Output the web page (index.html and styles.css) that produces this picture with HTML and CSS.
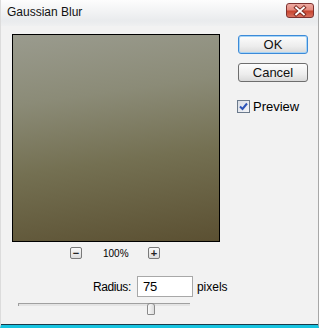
FILE: index.html
```html
<!DOCTYPE html>
<html lang="en">

<head>
    <meta charset="UTF-8">
    <meta name="viewport" content="width=device-width, initial-scale=1.0">
    <title>Gaussian Blur</title>
    <link rel="stylesheet" href="styles.css">
</head>

<body>
    <div class="dialog">
        <div class="titlebar">
            <span class="title">Gaussian Blur</span>
            <button class="close" aria-label="Close">
                <svg width="27" height="14" viewBox="0 0 27 14">
                    <path d="M9.5 3.5 L17.5 10.5 M17.5 3.5 L9.5 10.5" stroke="#7a2a22" stroke-width="4" stroke-linecap="square" />
                    <path d="M9.5 3.5 L17.5 10.5 M17.5 3.5 L9.5 10.5" stroke="#fff" stroke-width="2" stroke-linecap="square" />
                </svg>
            </button>
        </div>
        <div class="content">
            <div class="main">
                <div class="preview-col">
                    <div class="preview"></div>
                    <div class="zoom-row">
                        <span class="zoom-btn">&minus;</span>
                        <span class="zoom-value">100%</span>
                        <span class="zoom-btn">+</span>
                    </div>
                </div>
                <div class="actions">
                    <button class="button default">OK</button>
                    <button class="button">Cancel</button>
                    <label class="check">
                        <span class="box">
                            <svg width="9" height="9" viewBox="0 0 9 9">
                                <path d="M1 4.5 L3.5 7 L8 1.5" fill="none" stroke="#2c54b8" stroke-width="2" />
                            </svg>
                        </span>
                        Preview
                    </label>
                </div>
            </div>
            <div class="radius-row">
                <span class="label">Radius:</span>
                <span class="input">75</span>
                <span class="unit">pixels</span>
            </div>
            <div class="slider">
                <div class="track"></div>
                <div class="thumb"></div>
            </div>
        </div>
    </div>
</body>

</html>
```

FILE: styles.css
```css
body {
    margin: 0;
    padding: 0;
    font-family: 'Liberation Sans', Arial, sans-serif;
    font-size: 12px;
    color: #000;
    background: #f2f2f2;
}

.dialog {
    width: 319px;
    height: 328px;
    box-sizing: border-box;
    background: #f2f2f2;
    border-left: 1px solid #dcdcdc;
    border-right: 1px solid #a8a8a8;
    border-bottom: 3px solid #18c4e0;
    box-shadow: inset 0 -1px 0 #1a3a4a;
    display: flex;
    flex-direction: column;
}

.titlebar {
    height: 26px;
    display: flex;
    align-items: flex-start;
    justify-content: space-between;
    background: linear-gradient(to bottom, #fdfdfd, #e9ebed 80%, #eff0f1);
    padding: 0 4px 0 6px;
}

.title {
    font-size: 12px;
    margin-top: 5px;
    color: #111;
}

.close {
    margin-top: 3px;
    width: 28px;
    height: 15px;
    padding: 0;
    border: 1px solid #7e3230;
    border-radius: 3px;
    background: linear-gradient(to bottom, #eeaaa2, #e48a7e 45%, #c8452f 55%, #d8705e);
    display: flex;
    align-items: center;
    justify-content: center;
}

.close svg {
    display: block;
}

.content {
    padding: 8px 0 0 11px;
}

.main {
    display: flex;
}

.preview {
    width: 206px;
    height: 206px;
    border: 1px solid #000;
    background: linear-gradient(172deg, #9a9b8e 0%, #8b8b77 30%, #747052 60%, #5b5032 100%);
}

.zoom-row {
    display: flex;
    align-items: center;
    justify-content: center;
    gap: 21px;
    margin-top: 5px;
    padding-right: 2px;
}

.zoom-btn {
    width: 10px;
    height: 10px;
    border: 1px solid #7a7a7a;
    border-radius: 2px;
    background: linear-gradient(to bottom, #fafafa, #dcdcdc);
    font-size: 11px;
    font-weight: bold;
    line-height: 10px;
    text-align: center;
    color: #222;
}

.zoom-value {
    font-size: 10px;
    width: 24px;
    text-align: center;
}

.actions {
    margin-left: 17px;
    display: flex;
    flex-direction: column;
    align-items: flex-start;
}

.button {
    width: 70px;
    height: 19px;
    margin-left: 1px;
    padding: 0;
    font-family: 'Liberation Sans', Arial, sans-serif;
    font-size: 13px;
    color: #111;
    border: 1px solid #6e6e6e;
    border-radius: 3px;
    background: linear-gradient(to bottom, #fdfdfd, #ededed 60%, #dadada);
    margin-bottom: 9px;
}

.button.default {
    border-color: #3c8ad8;
    box-shadow: inset 0 0 0 1px #a6d4f6;
    margin-top: 1px;
}

.check {
    display: flex;
    align-items: center;
    gap: 3px;
    margin-top: 8px;
    font-size: 13px;
}

.box {
    width: 11px;
    height: 11px;
    border: 1px solid #6b7a8c;
    background: linear-gradient(135deg, #d8dde6, #f4f5f8);
    display: flex;
    align-items: center;
    justify-content: center;
}

.radius-row {
    display: flex;
    align-items: center;
    margin-top: 17px;
    padding-left: 81px;
    font-size: 12px;
}

.label {
    letter-spacing: -0.4px;
}

.input {
    width: 49px;
    height: 19px;
    margin-left: 6px;
    padding-left: 5px;
    border: 1px solid #a8a8a8;
    background: #fff;
    font-size: 13px;
    line-height: 19px;
}

.unit {
    margin-left: 4px;
}

.slider {
    position: relative;
    margin: 4px 0 0 6px;
    width: 172px;
    height: 12px;
}

.track {
    margin-top: 6px;
    height: 2px;
    border-top: 1px solid #a0a0a0;
    border-left: 1px solid #a0a0a0;
    background: #e4e4e4;
}

.thumb {
    position: absolute;
    left: 129px;
    top: 0;
    width: 6px;
    height: 10px;
    border: 1px solid #8a8a8a;
    border-radius: 3px 3px 1px 1px;
    background: linear-gradient(to right, #fafafa, #dcdcdc);
}
```
